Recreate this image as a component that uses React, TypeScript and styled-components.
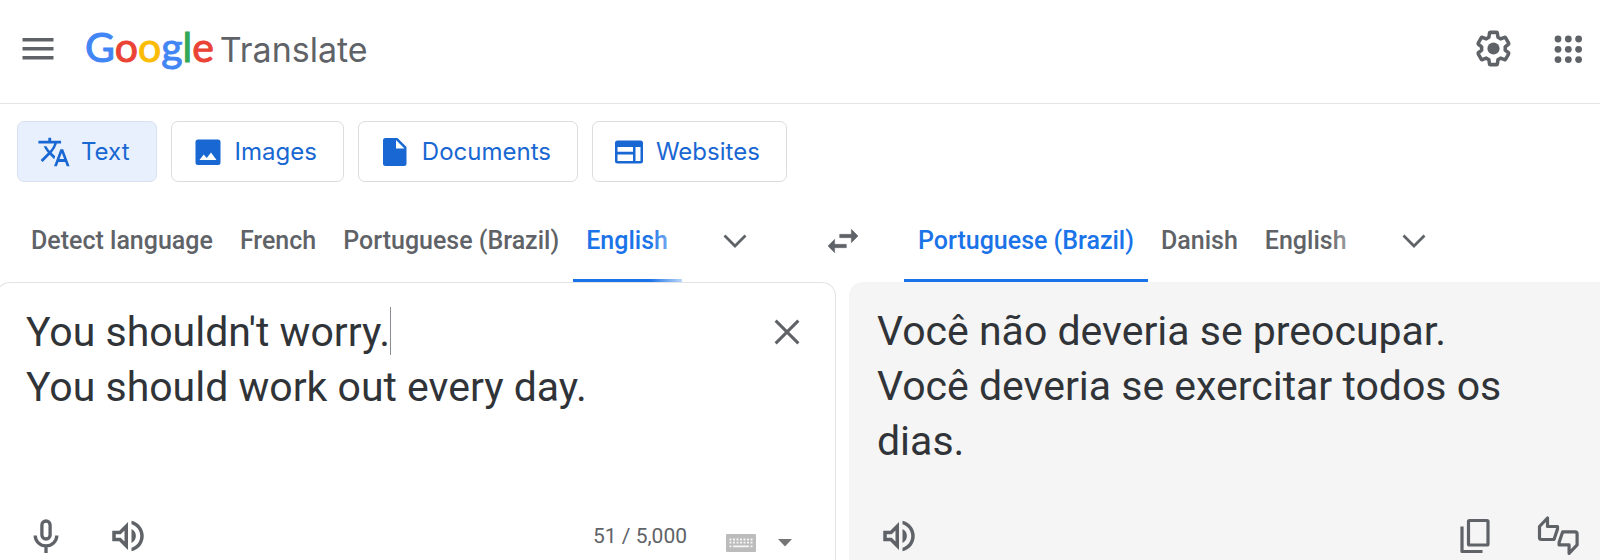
import React, { useState } from "react";
import styled, { createGlobalStyle, css } from "styled-components";
import { MdTranslate } from "react-icons/md";

const GlobalStyle = createGlobalStyle`
  *, *::before, *::after { box-sizing: border-box; }
  body { margin: 0; background: #fff; font-family: Roboto, "Liberation Sans", sans-serif; color: #303438; }
  button, textarea { font: inherit; color: inherit; }
`;

const Page = styled.div`
  display: flex;
  flex-direction: column;
  min-height: 100vh;
  overflow: hidden;
`;

const Header = styled.header`
  display: flex;
  align-items: center;
  height: 104px;
  padding: 0 10px 6px 16px;
  border-bottom: 1px solid #e4e5e7;
`;

const IconButton = styled.button<{ $size?: number }>`
  display: inline-flex;
  align-items: center;
  justify-content: center;
  flex: none;
  width: ${(p) => p.$size ?? 44}px;
  height: ${(p) => p.$size ?? 44}px;
  padding: 0;
  border: 0;
  background: none;
  color: #5f6368;
  cursor: pointer;
`;

const Brand = styled.a`
  display: flex;
  align-items: baseline;
  gap: 6px;
  margin-left: 25px;
  text-decoration: none;
  line-height: 52px;
`;

const Logo = styled.span`
  font-family: Lato, sans-serif;
  font-size: 41px;
`;

const Letter = styled.span<{ $color: string }>`
  color: ${(p) => p.$color};
  -webkit-text-stroke: 1px ${(p) => p.$color};
`;

const Product = styled.span`
  font-family: Inter, sans-serif;
  font-size: 34px;
  color: #5f6368;
`;

const HeaderActions = styled.div`
  display: flex;
  gap: 31px;
  margin-left: auto;
`;

const Modes = styled.nav`
  display: flex;
  gap: 14px;
  padding: 17px 17px 0;
`;

const ModeButton = styled.button<{ $active?: boolean }>`
  display: flex;
  align-items: center;
  gap: 10px;
  height: 61px;
  padding: 0 26px 0 19px;
  border: 1px solid ${(p) => (p.$active ? "#d9e2f1" : "#dadce0")};
  border-radius: 7px;
  background: ${(p) => (p.$active ? "#e8f0fe" : "#fff")};
  color: #1967d2;
  font-family: Inter, sans-serif;
  font-size: 24px;
  cursor: pointer;
`;

const LanguageBar = styled.div`
  display: grid;
  grid-template-columns: minmax(0, 821fr) 44px minmax(0, 735fr);
  align-items: center;
  height: 100px;
  padding-top: 18px;
`;

const LanguageGroup = styled.div<{ $target?: boolean }>`
  display: flex;
  align-items: center;
  gap: 31px;
  height: 100%;
  padding-left: ${(p) => (p.$target ? 39 : 17)}px;
`;

const TabList = styled.div`
  position: relative;
  display: flex;
  height: 100%;
  &::after {
    content: "";
    position: absolute;
    inset: 0 0 0 auto;
    width: 32px;
    background: linear-gradient(to right, transparent, rgba(255, 255, 255, 0.7));
    pointer-events: none;
  }
`;

const LanguageTab = styled.button<{ $active?: boolean }>`
  height: 100%;
  padding: 2px 14px 0 13px;
  border: 0;
  border-bottom: 3px solid transparent;
  background: none;
  color: #5f6368;
  font-size: 25px;
  font-weight: 500;
  white-space: nowrap;
  cursor: pointer;
  &:first-child {
    padding-left: 14px;
  }
  ${(p) =>
    p.$active &&
    css`
      color: #1a73e8;
      border-bottom-color: #1a73e8;
    `}
`;

const Panels = styled.main`
  display: grid;
  grid-template-columns: minmax(0, 836fr) minmax(0, 751fr);
  gap: 13px;
  flex: 1;
`;

const panel = css`
  display: flex;
  flex-direction: column;
`;

const SourcePanel = styled.section`
  ${panel}
  position: relative;
  margin-left: -4px;
  padding: 22px 21px 0 29px;
  border: 1px solid #e1e3e6;
  border-bottom: 0;
  border-radius: 14px 14px 0 0;
`;

const TargetPanel = styled.section`
  ${panel}
  padding: 22px 20px 0 28px;
  border-top-left-radius: 14px;
  background: #f5f5f5;
`;

const InputRow = styled.div`
  display: flex;
  align-items: flex-start;
  flex: 1;
`;

const SourceText = styled.textarea`
  flex: 1;
  min-width: 0;
  height: 165px;
  padding: 0;
  border: 0;
  outline: 0;
  resize: none;
  overflow: hidden;
  background: none;
  font-size: 41px;
  line-height: 55px;
`;

const Caret = styled.span`
  position: absolute;
  top: 24px;
  left: 393px;
  width: 1px;
  height: 48px;
  background: #8a8d91;
`;

const Translation = styled.p`
  flex: 1;
  margin: 0;
  font-size: 41px;
  line-height: 55px;
`;

const Footer = styled.footer`
  display: flex;
  align-items: center;
  height: 48px;
`;

const SourceTools = styled.div`
  display: flex;
  gap: 38px;
  margin-left: -2px;
`;

const Counter = styled.span`
  margin-left: auto;
  font-size: 21px;
  color: #5f6368;
`;

const KeyboardTools = styled.div`
  display: flex;
  align-items: center;
  gap: 8px;
  margin: 14px 15px 0 32px;
`;

const TargetTools = styled.div`
  display: flex;
  gap: 39px;
  margin-left: auto;
`;

const MenuIcon = () => (
  <svg width="32" height="24" viewBox="0 0 32 24" fill="currentColor" aria-hidden="true">
    <path d="M.5 1h31v3.400h-31zM.5 10h31v3.400h-31zM.5 19h31v3.400h-31z" />
  </svg>
);

const SettingsIcon = () => (
  <svg width="43" height="43" viewBox="0 0 24 24" aria-hidden="true">
    <g transform="translate(1.4 1.2) scale(.88 .9)" fill="none" stroke="currentColor" strokeWidth="2.2" strokeLinejoin="round">
      <path d="M19.43 12.98c.04-.32.07-.64.07-.98 0-.34-.03-.66-.07-.98l2.11-1.65c.19-.15.24-.42.12-.64l-2-3.46c-.09-.16-.26-.25-.44-.25-.06 0-.12.01-.17.03l-2.49 1c-.52-.4-1.08-.73-1.69-.98l-.38-2.65C14.46 2.18 14.25 2 14 2h-4c-.25 0-.46.18-.49.42l-.38 2.65c-.61.25-1.17.59-1.69.98l-2.49-1c-.06-.02-.12-.03-.18-.03-.17 0-.34.09-.43.25l-2 3.46c-.13.22-.07.49.12.64l2.11 1.65c-.04.32-.07.65-.07.98 0 .33.03.66.07.98l-2.11 1.65c-.19.15-.24.42-.12.64l2 3.46c.09.16.26.25.44.25.06 0 .12-.01.17-.03l2.49-1c.52.4 1.08.73 1.69.98l.38 2.65c.03.24.24.42.49.42h4c.25 0 .46-.18.49-.42l.38-2.65c.61-.25 1.17-.59 1.69-.98l2.49 1c.06.02.12.03.18.03.17 0 .34-.09.43-.25l2-3.46c.12-.22.07-.49-.12-.64l-2.11-1.65z" />
    </g>
    <circle cx="12" cy="12" r="3.4" fill="currentColor" />
  </svg>
);

const AppsIcon = () => (
  <svg width="28" height="28" viewBox="0 0 28 28" fill="currentColor" aria-hidden="true">
    {[4, 14.3, 24.6].map((y) => [4, 14.3, 24.6].map((x) => <circle key={`${x}-${y}`} cx={x} cy={y} r="3.4" />))}
  </svg>
);

const ImageIcon = () => (
  <svg width="34" height="34" viewBox="0 0 34 34" fill="currentColor" fillRule="evenodd" aria-hidden="true">
    <path d="M7 4.500H27q2.500 0 2.500 2.500V27.500q0 2.500-2.500 2.500H7q-2.500 0-2.500-2.500V7Q4.500 4.500 7 4.500zM8.500 25H25.500L20 17.500 15.700 23 12.700 19.500z" />
  </svg>
);

const DocumentIcon = () => (
  <svg width="34" height="34" viewBox="0 0 34 34" fill="currentColor" fillRule="evenodd" aria-hidden="true">
    <path d="M6.500 3H19.500L28.500 12V28.500q0 2.500-2.500 2.500H7.500Q5 31 5 28.500V5.500Q5 3 7.500 3zM18 5V13.500H26.500z" />
  </svg>
);

const WebsiteIcon = () => (
  <svg width="34" height="34" viewBox="0 0 34 34" fill="currentColor" fillRule="evenodd" aria-hidden="true">
    <path d="M5.500 5.500h23q2.500 0 2.500 2.500v18q0 2.500-2.500 2.500h-23Q3 28.500 3 26V8q0-2.500 2.500-2.500zM5.500 12v4.800H21V12zM5.500 19.500V26H21v-6.500zM23.500 12v14h5V12z" />
  </svg>
);

const TextIcon = () => <MdTranslate size={34} aria-hidden="true" />;

const ChevronIcon = () => (
  <svg width="24" height="14" viewBox="0 0 24 14" fill="none" stroke="currentColor" strokeWidth="2.8" aria-hidden="true">
    <path d="M1.5 1.5 12 12 22.5 1.5" />
  </svg>
);

const SwapIcon = () => (
  <svg width="40" height="40" viewBox="0 0 24 24" fill="currentColor" stroke="currentColor" strokeWidth=".3" aria-hidden="true">
    <path d="M6.99 11L3 15l3.99 4v-3H14v-2H6.99v-3zM21 9l-3.99-4v3H10v2h7.01v3L21 9z" />
  </svg>
);

const CloseIcon = () => (
  <svg width="26" height="26" viewBox="0 0 24 24" fill="none" stroke="currentColor" strokeWidth="2.8" aria-hidden="true">
    <path d="M1.5 1.5l21 21M22.5 1.5l-21 21" />
  </svg>
);

const MicIcon = () => (
  <svg width="26" height="34" viewBox="0 0 26 34" fill="none" stroke="currentColor" strokeWidth="3.3" aria-hidden="true">
    <rect x="8.9" y="2" width="8.2" height="18" rx="4.1" />
    <path d="M2.2 16.5a10.8 10.4 0 0 0 21.6 0M13 27v7" />
  </svg>
);

const VolumeIcon = () => (
  <svg width="42" height="42" viewBox="0 0 24 24" fill="currentColor" aria-hidden="true">
    <path d="M3 9v6h4l5 5V4L7 9H3zm7-.17v6.34L7.83 13H5v-2h2.83L10 8.83zM16.5 12A4.5 4.5 0 0 0 14 7.97v8.05c1.48-.73 2.5-2.25 2.5-4.02zM14 3.23v2.06c2.89.86 5 3.54 5 6.71s-2.11 5.85-5 6.71v2.06c4.01-.91 7-4.49 7-8.77s-2.99-7.86-7-8.77z" />
  </svg>
);

const CopyIcon = () => (
  <svg width="30" height="36" viewBox="0 0 30 36" fill="none" stroke="currentColor" strokeWidth="3.2" strokeLinejoin="round" aria-hidden="true">
    <rect x="8.5" y="2.5" width="19.5" height="24.5" rx="1" />
    <path d="M2 8.5v25h20.5" />
  </svg>
);

const THUMB = "M2.500 11.500 10.500 3V11.500H20.500v2.500L17 24.500H4.500q-2 0-2-2z";

const RateIcon = () => (
  <svg width="42" height="42" viewBox="0 0 42 42" fill="none" stroke="currentColor" strokeWidth="3.2" strokeLinejoin="round" aria-hidden="true">
    <path d={THUMB} />
    <path d={THUMB} transform="rotate(180 21.3 20.7)" />
  </svg>
);

const KeyboardIcon = () => (
  <svg width="30" height="18" viewBox="0 0 30 18" aria-hidden="true">
    <rect width="30" height="18" rx="1" fill="#bcbcbc" />
    <g stroke="#fff" strokeWidth="1.8" opacity=".85">
      <path d="M3.5 5.5h23M3.5 8.700h23" strokeDasharray="2 1.500" />
      <path d="M3.5 12.300h2M7 12.300h16M24.500 12.300h2" />
    </g>
  </svg>
);

const DropIcon = () => (
  <svg width="14" height="8" viewBox="0 0 14 8" fill="#757575" aria-hidden="true">
    <path d="M0 0h14L7 7.5z" />
  </svg>
);

const LOGO: [string, string][] = [
  ["G", "#4285f4"],
  ["o", "#ea4335"],
  ["o", "#fbbc05"],
  ["g", "#4285f4"],
  ["l", "#34a853"],
  ["e", "#ea4335"],
];

const MODES = [
  { label: "Text", Icon: TextIcon },
  { label: "Images", Icon: ImageIcon },
  { label: "Documents", Icon: DocumentIcon },
  { label: "Websites", Icon: WebsiteIcon },
];

const SOURCE_LANGUAGES = ["Detect language", "French", "Portuguese (Brazil)", "English"];
const TARGET_LANGUAGES = ["Portuguese (Brazil)", "Danish", "English"];

interface LanguagesProps {
  label: string;
  items: string[];
  initial: string;
  target?: boolean;
}

function Languages({ label, items, initial, target }: LanguagesProps) {
  const [active, setActive] = useState(initial);
  return (
    <LanguageGroup $target={target}>
      <TabList role="tablist" aria-label={label}>
        {items.map((name) => (
          <LanguageTab
            key={name}
            role="tab"
            aria-selected={name === active}
            $active={name === active}
            onClick={() => setActive(name)}
          >
            {name}
          </LanguageTab>
        ))}
      </TabList>
      <IconButton aria-label={`More: ${label}`}>
        <ChevronIcon />
      </IconButton>
    </LanguageGroup>
  );
}

export default function App() {
  const [mode, setMode] = useState("Text");
  const [text, setText] = useState("You shouldn't worry.\nYou should work out every day.");

  return (
    <Page>
      <GlobalStyle />
      <Header>
        <IconButton aria-label="Main menu"><MenuIcon /></IconButton>
        <Brand href="#">
          <Logo>
            {LOGO.map(([char, color], i) => (
              <Letter key={i} $color={color}>{char}</Letter>
            ))}
          </Logo>
          <Product>Translate</Product>
        </Brand>
        <HeaderActions>
          <IconButton aria-label="Settings"><SettingsIcon /></IconButton>
          <IconButton aria-label="Google apps"><AppsIcon /></IconButton>
        </HeaderActions>
      </Header>

      <Modes aria-label="Translation types">
        {MODES.map(({ label, Icon }) => (
          <ModeButton key={label} $active={label === mode} onClick={() => setMode(label)}>
            <Icon />
            {label}
          </ModeButton>
        ))}
      </Modes>

      <LanguageBar>
        <Languages label="Source language" items={SOURCE_LANGUAGES} initial="English" />
        <IconButton aria-label="Swap languages"><SwapIcon /></IconButton>
        <Languages label="Target language" items={TARGET_LANGUAGES} initial="Portuguese (Brazil)" target />
      </LanguageBar>

      <Panels>
        <SourcePanel>
          <InputRow>
            <SourceText
              aria-label="Source text"
              spellCheck={false}
              value={text}
              onChange={(e) => setText(e.target.value)}
            />
            <Caret />
            <IconButton aria-label="Clear source text" $size={54} onClick={() => setText("")}>
              <CloseIcon />
            </IconButton>
          </InputRow>
          <Footer>
            <SourceTools>
              <IconButton aria-label="Translate by voice"><MicIcon /></IconButton>
              <IconButton aria-label="Listen to source text"><VolumeIcon /></IconButton>
            </SourceTools>
            <Counter>51 / 5,000</Counter>
            <KeyboardTools>
              <IconButton aria-label="Show the input tool"><KeyboardIcon /></IconButton>
              <IconButton aria-label="Select an input tool" $size={28}><DropIcon /></IconButton>
            </KeyboardTools>
          </Footer>
        </SourcePanel>
        <TargetPanel>
          <Translation lang="pt-BR">
            Você não deveria se preocupar.
            <br />
            Você deveria se exercitar todos os dias.
          </Translation>
          <Footer>
            <IconButton aria-label="Listen to translation"><VolumeIcon /></IconButton>
            <TargetTools>
              <IconButton aria-label="Copy translation"><CopyIcon /></IconButton>
              <IconButton aria-label="Rate this translation"><RateIcon /></IconButton>
            </TargetTools>
          </Footer>
        </TargetPanel>
      </Panels>
    </Page>
  );
}
